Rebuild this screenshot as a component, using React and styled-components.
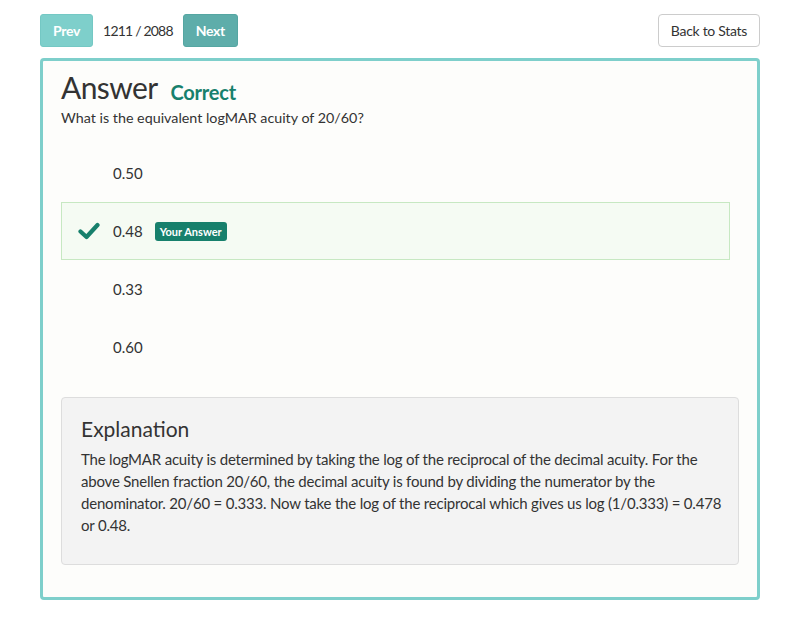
import React from 'react'
import styled, { createGlobalStyle } from 'styled-components'

const GlobalStyle = createGlobalStyle`
  body {
    margin: 0;
    background: #fff;
    font-family: Lato, "Open Sans", sans-serif;
    color: #333;
  }
`

const options = [
  { label: '0.50' },
  { label: '0.48', picked: true },
  { label: '0.33' },
  { label: '0.60' },
]

const App = () => {
  return (
    <Page>
      <GlobalStyle />
      <TopBar>
        <Pager>
          <NavButton>Prev</NavButton>
          <Counter>1211 / 2088</Counter>
          <NavButton dark>Next</NavButton>
        </Pager>
        <StatsButton>Back to Stats</StatsButton>
      </TopBar>
      <Card>
        <Heading>
          <Title>Answer</Title>
          <Status>Correct</Status>
        </Heading>
        <Question>What is the equivalent logMAR acuity of 20/60?</Question>
        <Options>
          {options.map((o) => (
            <Option key={o.label} picked={o.picked}>
              <Mark>
                {o.picked && (
                  <svg width="22" height="18" viewBox="0 0 22 18">
                    <path d="M2.5 9.5 L8.5 15 L19.5 3" fill="none" stroke="#17806c" strokeWidth="4.2" strokeLinecap="round" strokeLinejoin="round" />
                  </svg>
                )}
              </Mark>
              <OptionText>{o.label}</OptionText>
              {o.picked && <Badge>Your Answer</Badge>}
            </Option>
          ))}
        </Options>
        <Explanation>
          <ExplTitle>Explanation</ExplTitle>
          <ExplText>
            The logMAR acuity is determined by taking the log of the reciprocal of the decimal acuity. For the above Snellen fraction 20/60, the decimal acuity is found by dividing the numerator by the denominator. 20/60 = 0.333. Now take the log of the reciprocal which gives us log (1/0.333) = 0.478 or 0.48.
          </ExplText>
        </Explanation>
      </Card>
    </Page>
  )
}

export default App

const Page = styled.div`
  width: 720px;
  margin: 0 auto;
  padding-top: 14px;
`

const TopBar = styled.div`
  display: flex;
  align-items: center;
  justify-content: space-between;
  margin-bottom: 11px;
`

const Pager = styled.div`
  display: flex;
  align-items: center;
`

const NavButton = styled.button`
  height: 33px;
  padding: 0 12px;
  border: 1px solid ${(p) => (p.dark ? '#55a6a2' : '#74c8c4')};
  border-radius: 3px;
  background: ${(p) => (p.dark ? '#5eadaa' : '#7ecfcb')};
  color: #fff;
  font-family: inherit;
  font-weight: 700;
  font-size: 14px;
  letter-spacing: -0.3px;
`

const Counter = styled.span`
  font-size: 14px;
  letter-spacing: -0.8px;
  color: #333;
  margin: 0 10px;
`

const StatsButton = styled.button`
  height: 33px;
  padding: 0 12px;
  border: 1px solid #ccc;
  border-radius: 4px;
  background: #fff;
  color: #333;
  font-family: inherit;
  font-size: 14px;
  letter-spacing: -0.3px;
`

const Card = styled.div`
  border: 3px solid #7ecfcb;
  border-radius: 4px;
  background: #fdfdfb;
  padding: 9px 18px 32px;
`

const Heading = styled.div`
  display: flex;
  align-items: flex-end;
`

const Title = styled.h1`
  margin: 0;
  font-size: 30px;
  font-weight: 400;
  line-height: 35px;
  letter-spacing: -0.6px;
  color: #333;
`

const Status = styled.span`
  margin-left: 13px;
  margin-bottom: 1px;
  font-size: 20px;
  font-weight: 700;
  letter-spacing: -0.2px;
  color: #17806c;
`

const Question = styled.p`
  margin: 3px 0 0;
  font-size: 14.3px;
  line-height: 20px;
`

const Options = styled.div`
  display: flex;
  flex-direction: column;
  margin: 16px 9px 21px 0;
`

const Option = styled.div`
  display: flex;
  align-items: center;
  height: 58px;
  border: 1px solid ${(p) => (p.picked ? '#c7e8c2' : 'transparent')};
  background: ${(p) => (p.picked ? '#f5fbf3' : 'transparent')};
  padding-left: 16px;
  box-sizing: border-box;
`

const Mark = styled.div`
  width: 35px;
  display: flex;
  align-items: center;
`

const OptionText = styled.span`
  font-size: 15px;
  color: #333;
`

const Badge = styled.span`
  margin-left: 12px;
  background: #17806c;
  color: #fff;
  font-size: 11px;
  font-weight: 700;
  padding: 3px 5px;
  border-radius: 3px;
`

const Explanation = styled.div`
  background: #f3f3f3;
  border: 1px solid #ddd;
  border-radius: 4px;
  padding: 18px 12px 28px 19px;
`

const ExplTitle = styled.h3`
  margin: 0 0 6px;
  font-size: 21px;
  font-weight: 400;
  line-height: 26px;
  color: #333;
`

const ExplText = styled.p`
  margin: 0;
  font-size: 15px;
  line-height: 22px;
  letter-spacing: -0.2px;
  color: #333;
`
